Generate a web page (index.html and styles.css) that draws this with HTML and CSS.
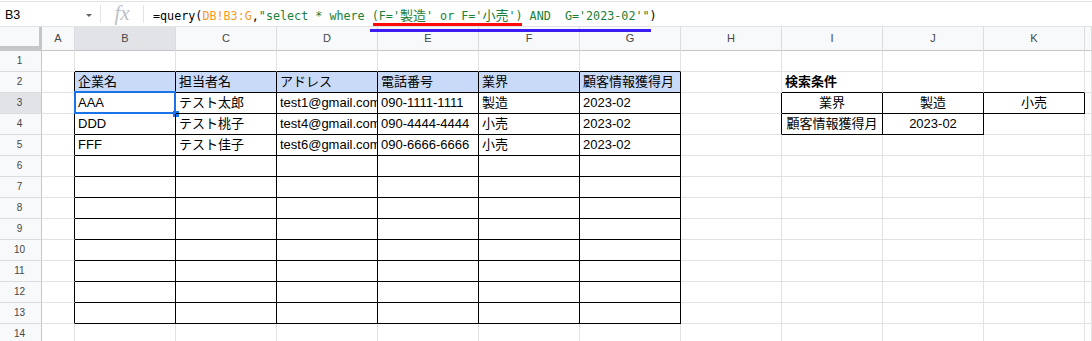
FILE: index.html
```html
<!DOCTYPE html>
<html lang="ja">
<head>
    <meta charset="UTF-8">
    <meta name="viewport" content="width=device-width, initial-scale=1.0">
    <title>Sheet - query</title>
    <link rel="stylesheet" href="styles.css">
</head>
<body>
    <div class="formula-bar">
        <div class="name-box">
            <span>B3</span>
            <span class="caret"></span>
        </div>
        <div class="divider"></div>
        <div class="fx">fx</div>
        <div class="divider"></div>
        <div class="formula"><span>=query(</span><span class="ref">DB!B3:G</span>,<span class="str">"select * where (F='<span class="jp">製造</span>' or F='<span class="jp">小売</span>') AND  G='2023-02'"</span>)</div>
    </div>

    <!-- hand drawn marks over the formula -->
    <div class="mark mark-red"></div>
    <div class="mark mark-blue"></div>

    <div class="sheet" id="sheet"></div>

    <script>
        const cols = ["A", "B", "C", "D", "E", "F", "G", "H", "I", "J", "K", "L"];
        const cells = {
            B2: "企業名", C2: "担当者名", D2: "アドレス", E2: "電話番号", F2: "業界", G2: "顧客情報獲得月",
            B3: "AAA", C3: "テスト太郎", D3: "test1@gmail.com", E3: "090-1111-1111", F3: "製造", G3: "2023-02",
            B4: "DDD", C4: "テスト桃子", D4: "test4@gmail.com", E4: "090-4444-4444", F4: "小売", G4: "2023-02",
            B5: "FFF", C5: "テスト佳子", D5: "test6@gmail.com", E5: "090-6666-6666", F5: "小売", G5: "2023-02",
            I2: "検索条件",
            I3: "業界", J3: "製造", K3: "小売",
            I4: "顧客情報獲得月", J4: "2023-02"
        };

        // cells that have a black border round them
        function boxed(c, r) {
            if (c >= 1 && c <= 6 && r >= 2 && r <= 13) return true;
            if (c >= 8 && c <= 10 && r === 3) return true;
            if (c >= 8 && c <= 9 && r === 4) return true;
            return false;
        }

        function buildSheet() {
            let html = `<div class="corner"></div>`;
            cols.forEach((col, c) => {
                html += `<div class="col-head${col === "B" ? " picked" : ""}">${col === "L" ? "" : col}</div>`;
            });

            for (let r = 1; r <= 14; r++) {
                html += `<div class="row-head${r === 3 ? " picked" : ""}">${r}</div>`;
                cols.forEach((col, c) => {
                    let cls = ["cell"];
                    if (boxed(c, r) || boxed(c + 1, r)) cls.push("edge-r");
                    if (boxed(c, r) || boxed(c, r + 1)) cls.push("edge-b");
                    if (r === 2 && c >= 1 && c <= 6) cls.push("title");
                    if (c >= 8 && (r === 3 || r === 4)) cls.push("center");
                    if (col + r === "I2") cls.push("bold");
                    let text = cells[col + r] || "";
                    if (col + r === "B3") {
                        text += `<div class="cursor"><span class="handle"></span></div>`;
                        cls.push("active");
                    }
                    html += `<div class="${cls.join(" ")}">${text}</div>`;
                });
            }
            document.getElementById("sheet").innerHTML = html;
        }

        buildSheet();
    </script>
</body>
</html>
```

FILE: styles.css
```css
html, body {
    overflow: hidden;
}
body {
    margin: 0;
    position: relative;
    font-family: "Liberation Sans", Arial, "Noto Sans CJK JP", sans-serif;
    background: white;
    color: #000;
}
.formula-bar {
    display: flex;
    align-items: center;
    height: 26px;
    margin-top: 1px;
    padding-top: 2px;
    box-sizing: border-box;
    border-top: 1px solid #e3e3e3;
    border-bottom: 1px solid #e3e3e3;
}
.name-box {
    display: flex;
    align-items: center;
    width: 100px;
    padding-left: 5px;
    box-sizing: border-box;
    font-size: 12.5px;
}
.caret {
    margin-left: auto;
    margin-right: 8px;
    border-left: 3px solid transparent;
    border-right: 3px solid transparent;
    border-top: 3px solid #5f6368;
}
.divider {
    width: 1px;
    height: 18px;
    margin-top: -3px;
    background: #e3e3e3;
}
.fx {
    width: 42px;
    text-align: center;
    font-family: "Liberation Serif", serif;
    font-style: italic;
    font-size: 21px;
    line-height: 18px;
    margin-top: -4px;
    color: #bdc1c6;
}
.formula {
    padding-left: 9px;
    font-family: "DejaVu Sans Mono", "Noto Sans CJK JP", monospace;
    font-size: 11.72px;
    line-height: 16px;
    white-space: pre;
}
.formula .ref {
    color: #f89a1c;
}
.formula .str {
    color: #188038;
}
.formula .jp {
    font-family: "Noto Sans CJK JP", sans-serif;
    font-size: 13px;
}
.mark {
    position: absolute;
    height: 3px;
}
.mark-red {
    left: 373px;
    top: 23px;
    width: 149px;
    background: #ff0a0a;
}
.mark-blue {
    left: 370px;
    top: 29px;
    width: 281px;
    background: #3a1df2;
}
.sheet {
    display: grid;
    grid-template-columns: 42px 33px repeat(10, 101px) 1fr;
    grid-template-rows: 24px;
    grid-auto-rows: 21px;
}
.corner {
    background: #f8f9fa;
    border-right: 3px solid #c4c7c5;
    border-bottom: 5px solid #c4c7c5;
}
.col-head {
    background: #f8f9fa;
    border-right: 1px solid #dadce0;
    border-bottom: 1px solid #c4c7c5;
    color: #444746;
    font-size: 11px;
    line-height: 23px;
    text-align: center;
}
.row-head {
    background: #f8f9fa;
    border-right: 1px solid #c4c7c5;
    border-bottom: 1px solid #dadce0;
    color: #444746;
    font-size: 10px;
    line-height: 20px;
    text-align: center;
    padding-right: 2px;
}
.picked {
    background: #e1e3e6;
}
.cell {
    position: relative;
    border-right: 1px solid #e2e2e3;
    border-bottom: 1px solid #e2e2e3;
    padding: 0 3px;
    font-size: 13px;
    line-height: 20px;
    white-space: nowrap;
    overflow: hidden;
}
.cell.active {
    overflow: visible;
}
.edge-r {
    border-right-color: #000;
}
.edge-b {
    border-bottom-color: #000;
}
.title {
    background: #c9daf8;
}
.center {
    text-align: center;
}
.bold {
    font-weight: bold;
}
.cursor {
    position: absolute;
    top: -2px;
    left: -1px;
    right: -1px;
    bottom: -1px;
    border: 2px solid #1a73e8;
}
.handle {
    position: absolute;
    right: -5px;
    bottom: -5px;
    width: 6px;
    height: 6px;
    background: #1a73e8;
}
```
